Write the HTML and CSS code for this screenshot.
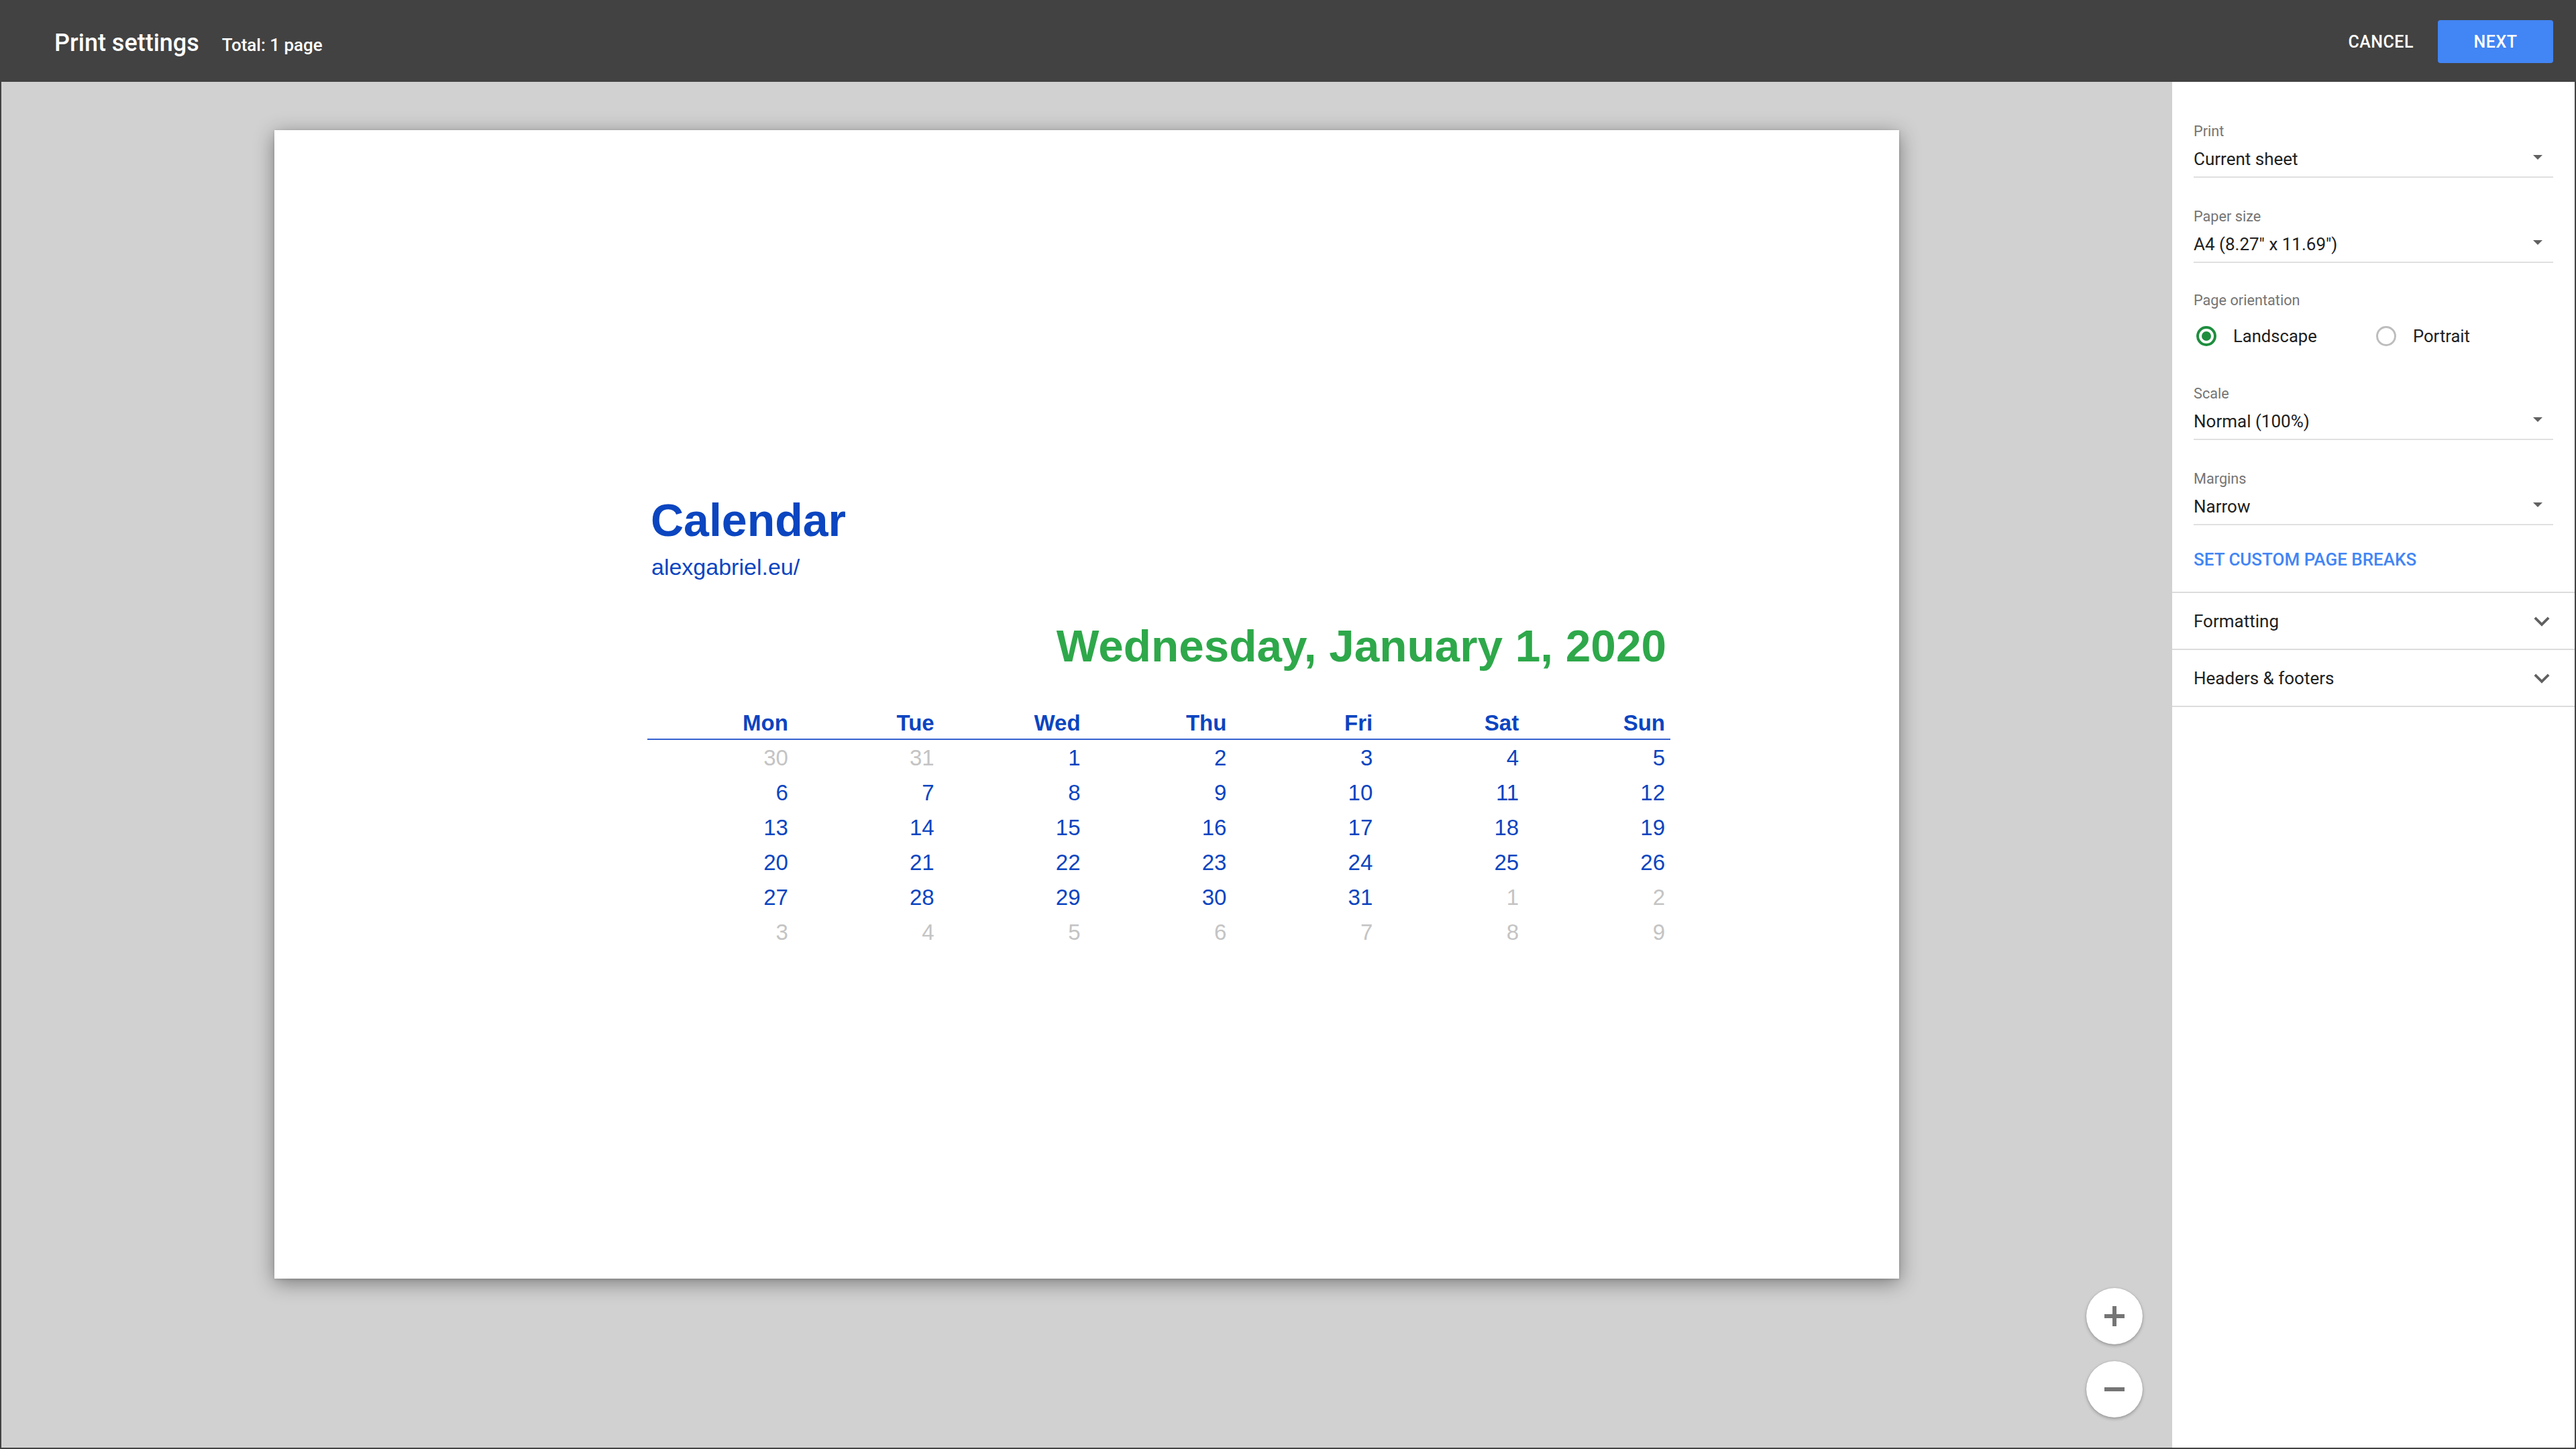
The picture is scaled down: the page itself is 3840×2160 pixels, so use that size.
FILE: index.html
```html
<!DOCTYPE html>
<html lang="en">
<head>
<meta charset="utf-8">
<title>Print settings</title>
<link rel="stylesheet" href="styles.css">
</head>
<body>
<div class="app">
  <header class="topbar">
    <div class="title-group">
      <span class="title">Print settings</span>
      <span class="total">Total: 1 page</span>
    </div>
    <div class="actions">
      <button class="btn-text">CANCEL</button>
      <button class="btn-primary">NEXT</button>
    </div>
  </header>
  <div class="main">
    <section class="preview">
      <div class="paper">
        <div class="cal">
          <div class="cal-title">Calendar</div>
          <div class="cal-url">alexgabriel.eu/</div>
          <div class="cal-date">Wednesday, January 1, 2020</div>
          <div class="cal-grid cal-head">
            <span>Mon</span><span>Tue</span><span>Wed</span><span>Thu</span><span>Fri</span><span>Sat</span><span>Sun</span>
          </div>
          <div class="cal-grid cal-body">
            <span class="muted">30</span><span class="muted">31</span><span>1</span><span>2</span><span>3</span><span>4</span><span>5</span>
            <span>6</span><span>7</span><span>8</span><span>9</span><span>10</span><span>11</span><span>12</span>
            <span>13</span><span>14</span><span>15</span><span>16</span><span>17</span><span>18</span><span>19</span>
            <span>20</span><span>21</span><span>22</span><span>23</span><span>24</span><span>25</span><span>26</span>
            <span>27</span><span>28</span><span>29</span><span>30</span><span>31</span><span class="muted">1</span><span class="muted">2</span>
            <span class="muted">3</span><span class="muted">4</span><span class="muted">5</span><span class="muted">6</span><span class="muted">7</span><span class="muted">8</span><span class="muted">9</span>
          </div>
        </div>
      </div>
      <div class="zoom-controls">
        <button class="zoom-btn" aria-label="Zoom in">
          <svg width="30" height="30" viewBox="0 0 30 30"><rect x="0" y="12" width="30" height="6" fill="#757575"/><rect x="12" y="0" width="6" height="30" fill="#757575"/></svg>
        </button>
        <button class="zoom-btn" aria-label="Zoom out">
          <svg width="30" height="30" viewBox="0 0 30 30"><rect x="0" y="12" width="30" height="6" fill="#757575"/></svg>
        </button>
      </div>
    </section>
    <aside class="sidebar">
      <div class="settings">
        <div class="field">
          <div class="field-label">Print</div>
          <div class="select"><span>Current sheet</span><span class="caret"></span></div>
        </div>
        <div class="field">
          <div class="field-label">Paper size</div>
          <div class="select"><span>A4 (8.27" x 11.69")</span><span class="caret"></span></div>
        </div>
        <div class="field field-orient">
          <div class="field-label">Page orientation</div>
          <div class="radio-row">
            <div class="radio-opt"><span class="radio on"></span><span>Landscape</span></div>
            <div class="radio-opt"><span class="radio"></span><span>Portrait</span></div>
          </div>
        </div>
        <div class="field field-scale">
          <div class="field-label">Scale</div>
          <div class="select"><span>Normal (100%)</span><span class="caret"></span></div>
        </div>
        <div class="field">
          <div class="field-label">Margins</div>
          <div class="select"><span>Narrow</span><span class="caret"></span></div>
        </div>
        <div class="link">SET CUSTOM PAGE BREAKS</div>
      </div>
      <div class="acc-row">
        <span>Formatting</span>
        <svg width="46" height="46" viewBox="0 0 24 24"><path d="M16.59 8.59L12 13.17 7.41 8.59 6 10l6 6 6-6z" fill="#616161"/></svg>
      </div>
      <div class="acc-row acc-last">
        <span>Headers &amp; footers</span>
        <svg width="46" height="46" viewBox="0 0 24 24"><path d="M16.59 8.59L12 13.17 7.41 8.59 6 10l6 6 6-6z" fill="#616161"/></svg>
      </div>
    </aside>
  </div>
</div>
</body>
</html>
```

FILE: styles.css
```css
html, body {
  margin: 0;
  padding: 0;
}

body {
  width: 3840px;
  height: 2160px;
  overflow: hidden;
  font-family: Roboto, "Noto Sans", sans-serif;
}

.app {
  display: flex;
  flex-direction: column;
  height: 2160px;
  box-sizing: border-box;
  background: #424242;
  padding: 0 2px 2px 2px;
}

/* ---------- top bar ---------- */
.topbar {
  height: 122px;
  flex: none;
  display: flex;
  align-items: center;
  justify-content: space-between;
  box-sizing: border-box;
  padding: 6px 32px 0 79px;
  color: #fff;
}

.title-group {
  display: flex;
  align-items: baseline;
  gap: 34px;
}

.title {
  font-size: 36px;
  font-weight: 500;
}

.total {
  font-size: 26px;
  font-weight: 500;
}

.actions {
  display: flex;
  align-items: center;
  margin-top: -4px;
}

.btn-text {
  background: none;
  border: 0;
  padding: 0;
  margin-right: 36px;
  color: #fff;
  font-family: Roboto, sans-serif;
  font-size: 25px;
  font-weight: 500;
  letter-spacing: 0.5px;
}

.btn-primary {
  width: 172px;
  height: 64px;
  background: #4285f4;
  border: 0;
  border-radius: 4px;
  color: #fff;
  font-family: Roboto, sans-serif;
  font-size: 25px;
  font-weight: 500;
  letter-spacing: 0.5px;
}

/* ---------- main ---------- */
.main {
  flex: 1;
  display: flex;
  min-height: 0;
}

.preview {
  flex: 1;
  position: relative;
  background: #d1d1d1;
  display: flex;
  justify-content: center;
  align-items: flex-start;
  padding-top: 72px;
}

.paper {
  flex: none;
  width: 2422px;
  height: 1712px;
  box-sizing: border-box;
  background: #fff;
  box-shadow: 0 6px 28px rgba(0, 0, 0, 0.42), 0 1px 4px rgba(0, 0, 0, 0.15);
  padding: 547px 0 0 556px;
  font-family: "Liberation Sans", Arial, sans-serif;
}

.cal {
  width: 1525px;
}

.cal-title {
  font-size: 68px;
  line-height: 68px;
  font-weight: 700;
  color: #0b45c0;
  padding-left: 5px;
}

.cal-url {
  margin-top: 16px;
  font-size: 34px;
  line-height: 40px;
  color: #0b45c0;
  padding-left: 6px;
}

.cal-date {
  margin-top: 64px;
  font-size: 67.5px;
  line-height: 67px;
  font-weight: 700;
  color: #2ea84a;
  text-align: right;
  padding-right: 6px;
}

.cal-grid {
  display: grid;
  grid-template-columns: repeat(7, 1fr);
}

.cal-grid span {
  text-align: right;
  padding-right: 8px;
  font-size: 33px;
  color: #0b45c0;
}

.cal-head {
  margin-top: 62px;
  border-bottom: 2px solid #3461cf;
}

.cal-head span {
  font-weight: 700;
  line-height: 40px;
  padding-bottom: 3px;
}

.cal-body {
  margin-top: 1px;
}

.cal-body span {
  line-height: 52px;
}

.cal-body span.muted {
  color: #c4c4c4;
}

.zoom-controls {
  position: absolute;
  right: 44px;
  bottom: 45px;
  display: flex;
  flex-direction: column;
  gap: 25px;
}

.zoom-btn {
  width: 84px;
  height: 84px;
  padding: 0;
  border: 0;
  border-radius: 50%;
  background: #fff;
  box-shadow: 0 2px 5px rgba(0, 0, 0, 0.28), 0 0 2px rgba(0, 0, 0, 0.12);
  display: flex;
  align-items: center;
  justify-content: center;
}

/* ---------- sidebar ---------- */
.sidebar {
  flex: none;
  width: 600px;
  background: #fff;
}

.settings {
  padding: 62px 32px 33px 32px;
}

.field + .field {
  margin-top: 46px;
}

.field-label {
  font-size: 21.7px;
  line-height: 24px;
  color: #757575;
}

.select {
  margin-top: 14px;
  display: flex;
  justify-content: space-between;
  align-items: center;
  font-size: 26px;
  line-height: 30px;
  color: #212121;
  padding-bottom: 11px;
  border-bottom: 2px solid #e0e0e0;
}

.caret {
  width: 0;
  height: 0;
  border-left: 7px solid transparent;
  border-right: 7px solid transparent;
  border-top: 7px solid #616161;
  margin-right: 16px;
  margin-bottom: 6px;
}

.field + .field-orient {
  margin-top: 44px;
}

.radio-row {
  margin-top: 24px;
  display: grid;
  grid-template-columns: 1fr 1fr;
  height: 34px;
}

.radio-opt {
  display: flex;
  align-items: center;
  gap: 25px;
  font-size: 25.6px;
  color: #212121;
}

.radio {
  width: 30px;
  height: 30px;
  margin-left: 4px;
  box-sizing: border-box;
  border-radius: 50%;
  border: 3px solid #bdbdbd;
  display: flex;
  align-items: center;
  justify-content: center;
}

.radio.on {
  border: 4px solid #1e8e3e;
}

.radio.on::after {
  content: "";
  width: 14px;
  height: 14px;
  border-radius: 50%;
  background: #1e8e3e;
}

.field + .field-scale {
  margin-top: 57px;
}

.link {
  margin-top: 36px;
  font-size: 26px;
  line-height: 30px;
  font-weight: 500;
  color: #4285f4;
}

.acc-row {
  height: 83px;
  border-top: 2px solid #dcdcdc;
  display: flex;
  align-items: center;
  justify-content: space-between;
  padding: 0 26px 0 32px;
  font-size: 26px;
  color: #212121;
}

.acc-row.acc-last {
  border-bottom: 2px solid #dcdcdc;
}
```
